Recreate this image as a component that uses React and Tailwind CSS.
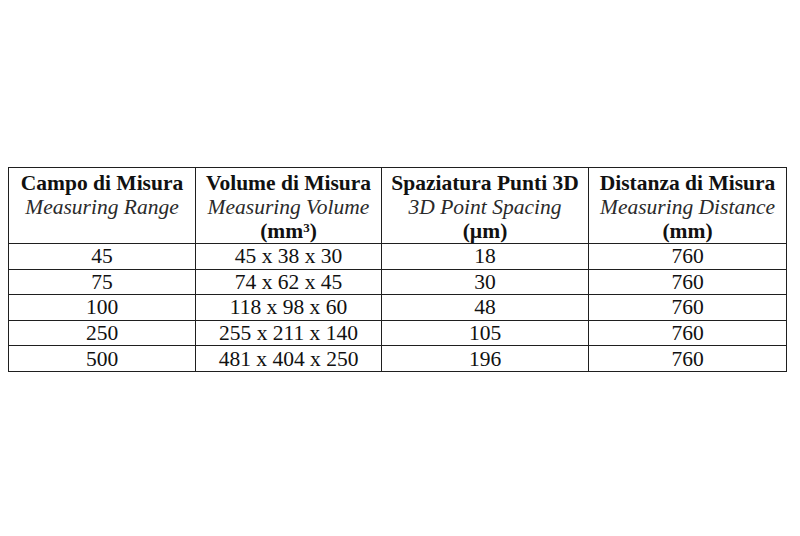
import React from 'react';

const COLUMNS = [
  { it: 'Campo di Misura', en: 'Measuring Range', unit: null, w: 'w-[187px]' },
  { it: 'Volume di Misura', en: 'Measuring Volume', unit: <>(mm<sup className="text-[13px]">3</sup>)</>, w: 'w-[186px]' },
  { it: 'Spaziatura Punti 3D', en: '3D Point Spacing', unit: '(µm)', w: 'w-[207px]' },
  { it: 'Distanza di Misura', en: 'Measuring Distance', unit: '(mm)', w: 'w-[198px]' },
];

const ROWS = [
  ['45', '45 x 38 x 30', '18', '760'],
  ['75', '74 x 62 x 45', '30', '760'],
  ['100', '118 x 98 x 60', '48', '760'],
  ['250', '255 x 211 x 140', '105', '760'],
  ['500', '481 x 404 x 250', '196', '760'],
];

export default function App() {
  return (
    <div className="w-[800px] h-[536px] bg-white pt-[167px] pl-[8px] text-[#111]" style={{ fontFamily: '"Liberation Serif", "Times New Roman", serif' }}>
      <table className="border-collapse w-[778px] table-fixed text-[21.5px] leading-[24px]">
        <thead>
          <tr className="h-[75px]">
            {COLUMNS.map(c => (
              <th key={c.it} className={`${c.w} border border-[#1f1f1f] align-top pt-[3px] font-normal text-center`}>
                <div className="font-bold">{c.it}</div>
                <div className="italic text-[#2a2a2a]">{c.en}</div>
                {c.unit && <div className="font-bold">{c.unit}</div>}
              </th>
            ))}
          </tr>
        </thead>
        <tbody>
          {ROWS.map(r => (
            <tr key={r[0]} className="h-[25.6px]">
              {r.map((v, i) => (
                <td key={i} className="border border-[#1f1f1f] text-center p-0">{v}</td>
              ))}
            </tr>
          ))}
        </tbody>
      </table>
    </div>
  );
}
